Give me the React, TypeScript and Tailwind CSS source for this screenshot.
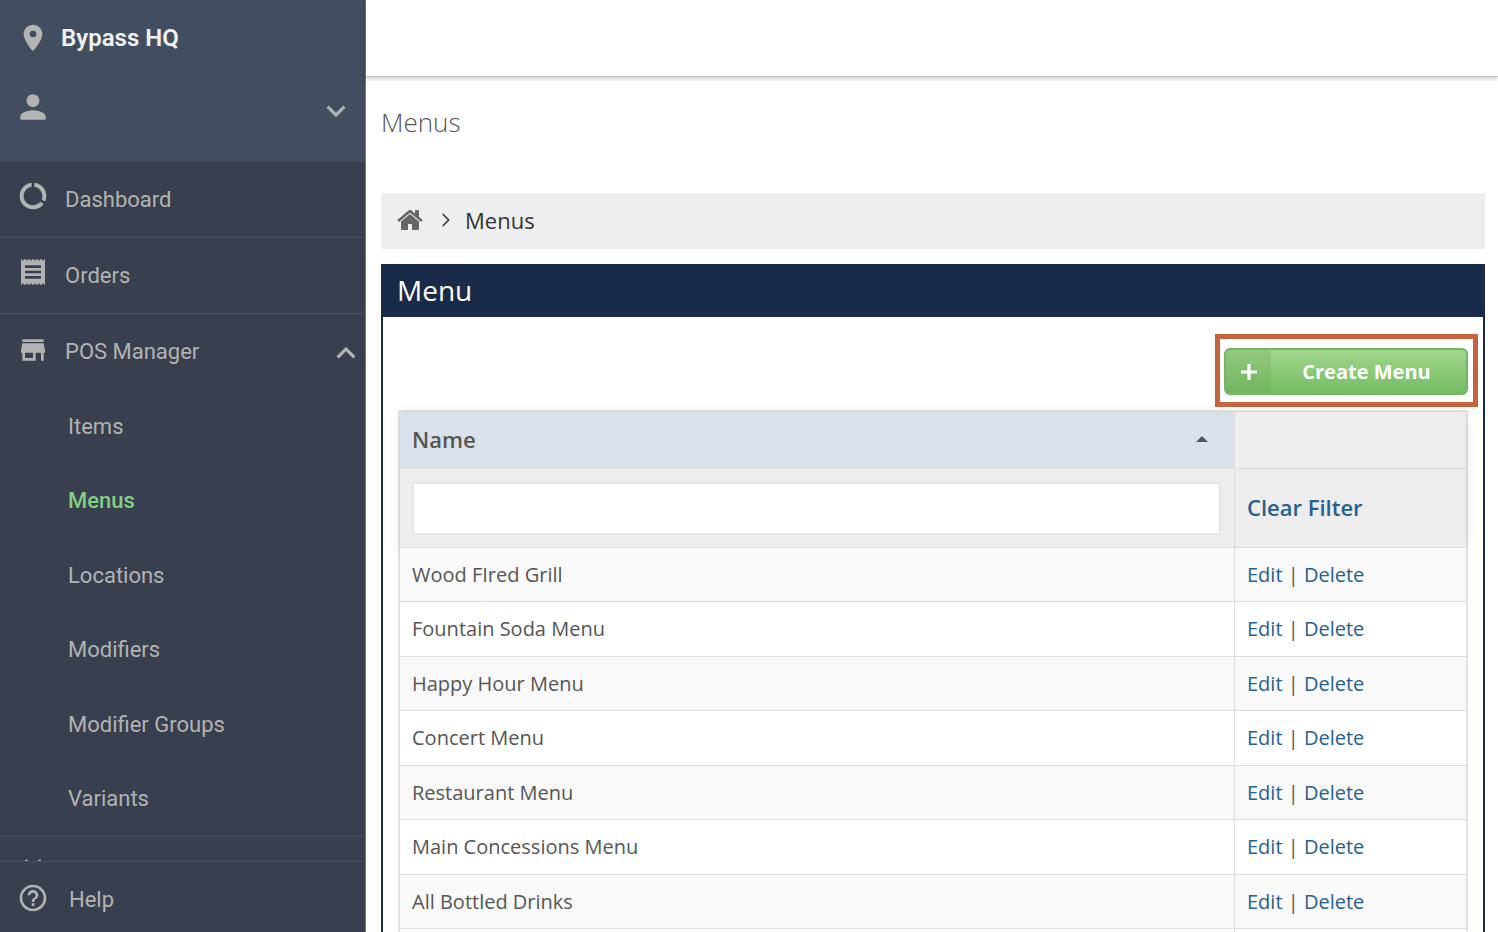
import { useState } from "react";
import type { IconType } from "react-icons";
import {
  MdDataUsage,
  MdDateRange,
  MdExpandLess,
  MdExpandMore,
  MdHelpOutline,
  MdLocationOn,
  MdPerson,
  MdReceipt,
  MdStore,
} from "react-icons/md";
import { ChevronRight } from "lucide-react";
import clsx from "clsx";

const posLinks = ["Items", "Menus", "Locations", "Modifiers", "Modifier Groups", "Variants"];

const menus = [
  "Wood FIred Grill",
  "Fountain Soda Menu",
  "Happy Hour Menu",
  "Concert Menu",
  "Restaurant Menu",
  "Main Concessions Menu",
  "All Bottled Drinks",
  "",
];

function HomeIcon() {
  return (
    <svg viewBox="0 0 1664 1792" className="w-[26px] h-7" fill="currentColor" aria-hidden="true">
      <path d="M1408 992v480q0 26-19 45t-45 19h-384v-384h-256v384h-384q-26 0-45-19t-19-45v-480q0-1 .5-3t.5-3l575-474 575 474q1 2 1 6zm223-69l-62 74q-8 9-21 11h-3q-13 0-21-7l-692-577-692 577q-12 8-24 7-13-2-21-11l-62-74q-8-10-7-23.5t11-21.5l719-599q32-26 76-26t76 26l244 204v-195q0-14 9-23t23-9h192q14 0 23 9t9 23v408l219 182q10 8 11 21.5t-7 23.5z" />
    </svg>
  );
}

function NavLink({ icon: Icon, label }: { icon: IconType; label: string }) {
  return (
    <a href="#" className="flex h-[76px] items-start border-b border-[#434d5e] pl-[17px] pt-[18px]">
      <Icon className="w-8 h-8 shrink-0" />
      <span className="ml-4 pt-1 leading-8">{label}</span>
    </a>
  );
}

function Sidebar() {
  const [posOpen, setPosOpen] = useState(true);

  return (
    <aside className="flex w-[366px] shrink-0 flex-col border-r border-[#6b7482] bg-[#393f4e] font-[Roboto,sans-serif] text-[22px] text-[#b3b3b3]">
      {/* Venue and account */}
      <div className="h-[162px] shrink-0 bg-[#434d60]">
        <div className="flex items-center pl-[17px] pt-[22px]">
          <MdLocationOn className="w-8 h-8" />
          <span className="ml-3 text-2xl font-semibold leading-8 text-[#f2f2f2]">Bypass HQ</span>
        </div>
        <button aria-label="Account" className="mt-[34px] flex w-full items-start justify-between pl-[14px] pr-[10px]">
          <MdPerson className="w-[38px] h-[38px]" />
          <MdExpandMore className="mt-1 w-[38px] h-[38px]" />
        </button>
      </div>

      <nav className="min-h-0 flex-1 overflow-hidden">
        <NavLink icon={MdDataUsage} label="Dashboard" />
        <NavLink icon={MdReceipt} label="Orders" />

        <button
          onClick={() => setPosOpen(!posOpen)}
          aria-expanded={posOpen}
          className="flex h-[75px] w-full items-start pl-[17px] pt-5 text-left"
        >
          <MdStore className="w-8 h-8 shrink-0" />
          <span className="ml-4 flex-1 pt-[2px] leading-8">POS Manager</span>
          {posOpen ? <MdExpandLess className="w-[38px] h-[38px]" /> : <MdExpandMore className="w-[38px] h-[38px]" />}
        </button>

        {posOpen && (
          <ul className="flex h-[448px] flex-col border-b border-[#434d5e]">
            {posLinks.map((link) => (
              <li key={link} className="flex flex-1 items-center pl-[68px]">
                <a href="#" className={clsx(link === "Menus" && "font-medium text-[#82cf84]")}>
                  {link}
                </a>
              </li>
            ))}
          </ul>
        )}

        <a href="#" aria-label="Calendar" className="flex h-[76px] items-start pl-[17px] pt-5">
          <MdDateRange className="w-8 h-8" />
        </a>
      </nav>

      <a href="#" className="flex h-[71px] shrink-0 items-center border-t border-[#434d5e] pl-[17px] pt-[2px]">
        <MdHelpOutline className="w-8 h-8" />
        <span className="ml-5 pt-[2px]">Help</span>
      </a>
    </aside>
  );
}

function CreateButton() {
  return (
    <div className="relative">
      <button className="flex h-[47px] w-[244px] overflow-hidden rounded-md border-2 border-[#74b566] bg-linear-to-b from-[#9fd68c] to-[#76bc64] text-xl font-bold text-white">
        <span className="flex h-full w-[45px] items-center justify-center bg-[#5e9a50]/20">
          <svg viewBox="0 0 16 16" className="w-4 h-4" fill="currentColor" aria-hidden="true">
            <path d="M6.4 0h3.2v6.4H16v3.2H9.6V16H6.4V9.6H0V6.4h6.4z" />
          </svg>
        </span>
        <span className="flex h-full flex-1 items-center justify-center pr-1">Create Menu</span>
      </button>
      {/* Callout frame around the button */}
      <div className="pointer-events-none absolute -top-[14px] -bottom-3 -left-[9px] -right-[10px] border-5 border-[#c7623e]" />
    </div>
  );
}

function MenuTable() {
  const [filter, setFilter] = useState("");
  const rows = menus.filter((menu) => menu.toLowerCase().includes(filter.toLowerCase()));

  return (
    <table className="mt-[15px] w-full table-fixed border-separate border-spacing-0 border-x-2 border-t-2 border-[#e2e2e2] text-xl text-[#555]">
      <colgroup>
        <col />
        <col className="w-[232px]" />
      </colgroup>
      <thead className="bg-[#ededed] text-left text-[22px] shadow-[0_2px_12px_rgba(0,0,0,0.1)]">
        <tr className="h-[57px]">
          <th className="border-b border-[#e2e2e2] bg-[#dae1e8] px-3 pb-[2px] font-semibold [text-shadow:0_1px_0_#fff]">
            <button className="flex w-full items-center justify-between pr-[14px]">
              Name
              <svg viewBox="0 0 12 6" className="w-3 h-[6px]" fill="currentColor" aria-hidden="true">
                <path d="M0 6 6 0l6 6z" />
              </svg>
            </button>
          </th>
          <th className="border-b border-l border-[#dcdcdc]" />
        </tr>
        <tr className="h-[79px]">
          <th className="border-b border-[#e2e2e2] py-0 pl-3 pr-[13px]">
            <input
              aria-label="Filter by name"
              value={filter}
              onChange={(e) => setFilter(e.target.value)}
              className="block h-[53px] w-full border-2 border-[#e6e6e6] bg-white px-3 font-normal outline-none"
            />
          </th>
          <th className="border-b border-l border-[#dcdcdc] px-3 pb-[2px] font-semibold text-[#27608f]">
            <button onClick={() => setFilter("")}>Clear Filter</button>
          </th>
        </tr>
      </thead>
      <tbody>
        {rows.map((menu, i) => (
          <tr key={i} className="odd:h-[54px] even:h-[55px] odd:bg-[#f9f9f9] even:bg-white">
            <td className="border-b border-[#dfdfdf] px-3">{menu}</td>
            <td className="border-b border-l border-[#dcdcdc] px-3">
              {menu && (
                <>
                  <a href="#" className="text-[#27608f]">Edit</a>
                  {" | "}
                  <a href="#" className="text-[#27608f]">Delete</a>
                </>
              )}
            </td>
          </tr>
        ))}
      </tbody>
    </table>
  );
}

export default function App() {
  return (
    <div className="flex h-screen overflow-hidden bg-white font-['Open_Sans',sans-serif]">
      <Sidebar />
      <div className="flex min-w-0 flex-1 flex-col">
        <header className="h-[77px] shrink-0 border-b border-[#c4c4c4] bg-white shadow-[0_1px_5px_rgba(0,0,0,0.25)]" />

        <main className="min-h-0 flex-1 overflow-hidden pl-[15px] pr-[13px]">
          <h1 className="mt-[27px] text-[26px] font-light leading-9 text-[#555]">Menus</h1>

          <div className="mt-[53px] flex h-14 items-center bg-[#eee] px-4 pb-[2px] text-[22px] text-[#333]">
            <a href="#" aria-label="Home" className="text-[#666]">
              <HomeIcon />
            </a>
            <ChevronRight className="ml-3 mr-2 w-[22px] h-[22px]" strokeWidth={1.8} />
            <span>Menus</span>
          </div>

          <section className="mt-[15px] border-2 border-t-0 border-[#1a2b49]">
            <h2 className="h-[53px] bg-[#1a2b49] px-[14px] text-[28px] leading-[53px] text-white">Menu</h2>
            <div className="px-[15px] pt-[31px]">
              <div className="flex justify-end">
                <CreateButton />
              </div>
              <MenuTable />
            </div>
          </section>
        </main>
      </div>
    </div>
  );
}
